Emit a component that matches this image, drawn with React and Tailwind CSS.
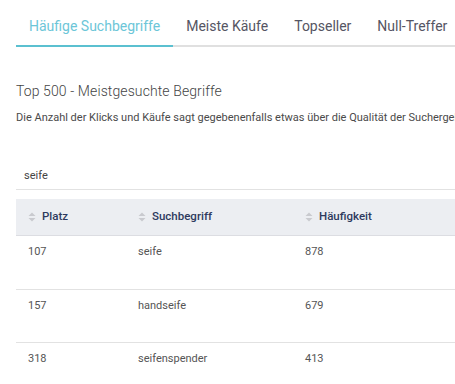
import React from 'react';

const tabs = ['Häufige Suchbegriffe', 'Meiste Käufe', 'Topseller', 'Null-Treffer'];

const rows = [
  { platz: '107', term: 'seife', count: '878' },
  { platz: '157', term: 'handseife', count: '679' },
  { platz: '318', term: 'seifenspender', count: '413' },
];

function SortIcon() {
  return (
    <svg width="8" height="10" viewBox="0 0 8 10" className="shrink-0">
      <path d="M4 0.5 L7.5 4 L0.5 4 Z" fill="#c9cacf" />
      <path d="M4 9.5 L7.5 6 L0.5 6 Z" fill="#c9cacf" />
    </svg>
  );
}

export default function App() {
  return (
    <div className="w-[455px] h-[384px] overflow-hidden bg-white font-['Roboto',sans-serif] whitespace-nowrap">
      <div className="pl-4">
        {/* Tabs */}
        <div className="flex border-b-2 border-[#e0e0e0]">
          {tabs.map((t, i) => (
            <div
              key={t}
              className={`px-[13px] pt-[16px] pb-[9px] text-[14px] leading-[20px] -mb-[2px] border-b-2 ${
                i === 0 ? 'border-[#5bc0d0] text-[#6cc6d8]' : 'border-transparent text-[#555563]'
              }`}
            >
              {t}
            </div>
          ))}
        </div>

        {/* Heading */}
        <h2 className="mt-[34px] text-[14px] leading-[20px] font-light text-[#444] tracking-[0.1px]">
          Top 500 - Meistgesuchte Begriffe
        </h2>
        <p className="mt-[9px] text-[11px] leading-[16px] text-[#4a4a4a]">
          Die Anzahl der Klicks und Käufe sagt gegebenenfalls etwas über die Qualität der Suchergebnisse aus.
        </p>

        {/* Search input */}
        <div className="mt-[38px] h-[26px] flex items-center pl-2 border-b border-[#e2e2e2] text-[11px] text-[#444]">
          seife
        </div>

        {/* Table */}
        <div className="mt-[9px] w-[600px]">
          <div className="flex h-[37px] items-center bg-[#eceef2] border-b border-[#dcdde2] text-[11.5px] font-medium text-[#2e3a5e]">
            <div className="w-[110px] pl-3 flex items-center gap-[6px]">
              <SortIcon />
              Platz
            </div>
            <div className="w-[167px] pl-3 flex items-center gap-[6px]">
              <SortIcon />
              Suchbegriff
            </div>
            <div className="pl-3 flex items-center gap-[6px]">
              <SortIcon />
              Häufigkeit
            </div>
          </div>
          {rows.map((r, i) => (
            <div
              key={r.platz}
              className={`flex h-[53px] pt-[8px] text-[11px] leading-[16px] text-[#555] ${
                i > 0 ? 'border-t border-[#e2e2e2]' : ''
              }`}
            >
              <div className="w-[110px] pl-3">{r.platz}</div>
              <div className="w-[167px] pl-3">{r.term}</div>
              <div className="pl-3">{r.count}</div>
            </div>
          ))}
        </div>
      </div>
    </div>
  );
}
